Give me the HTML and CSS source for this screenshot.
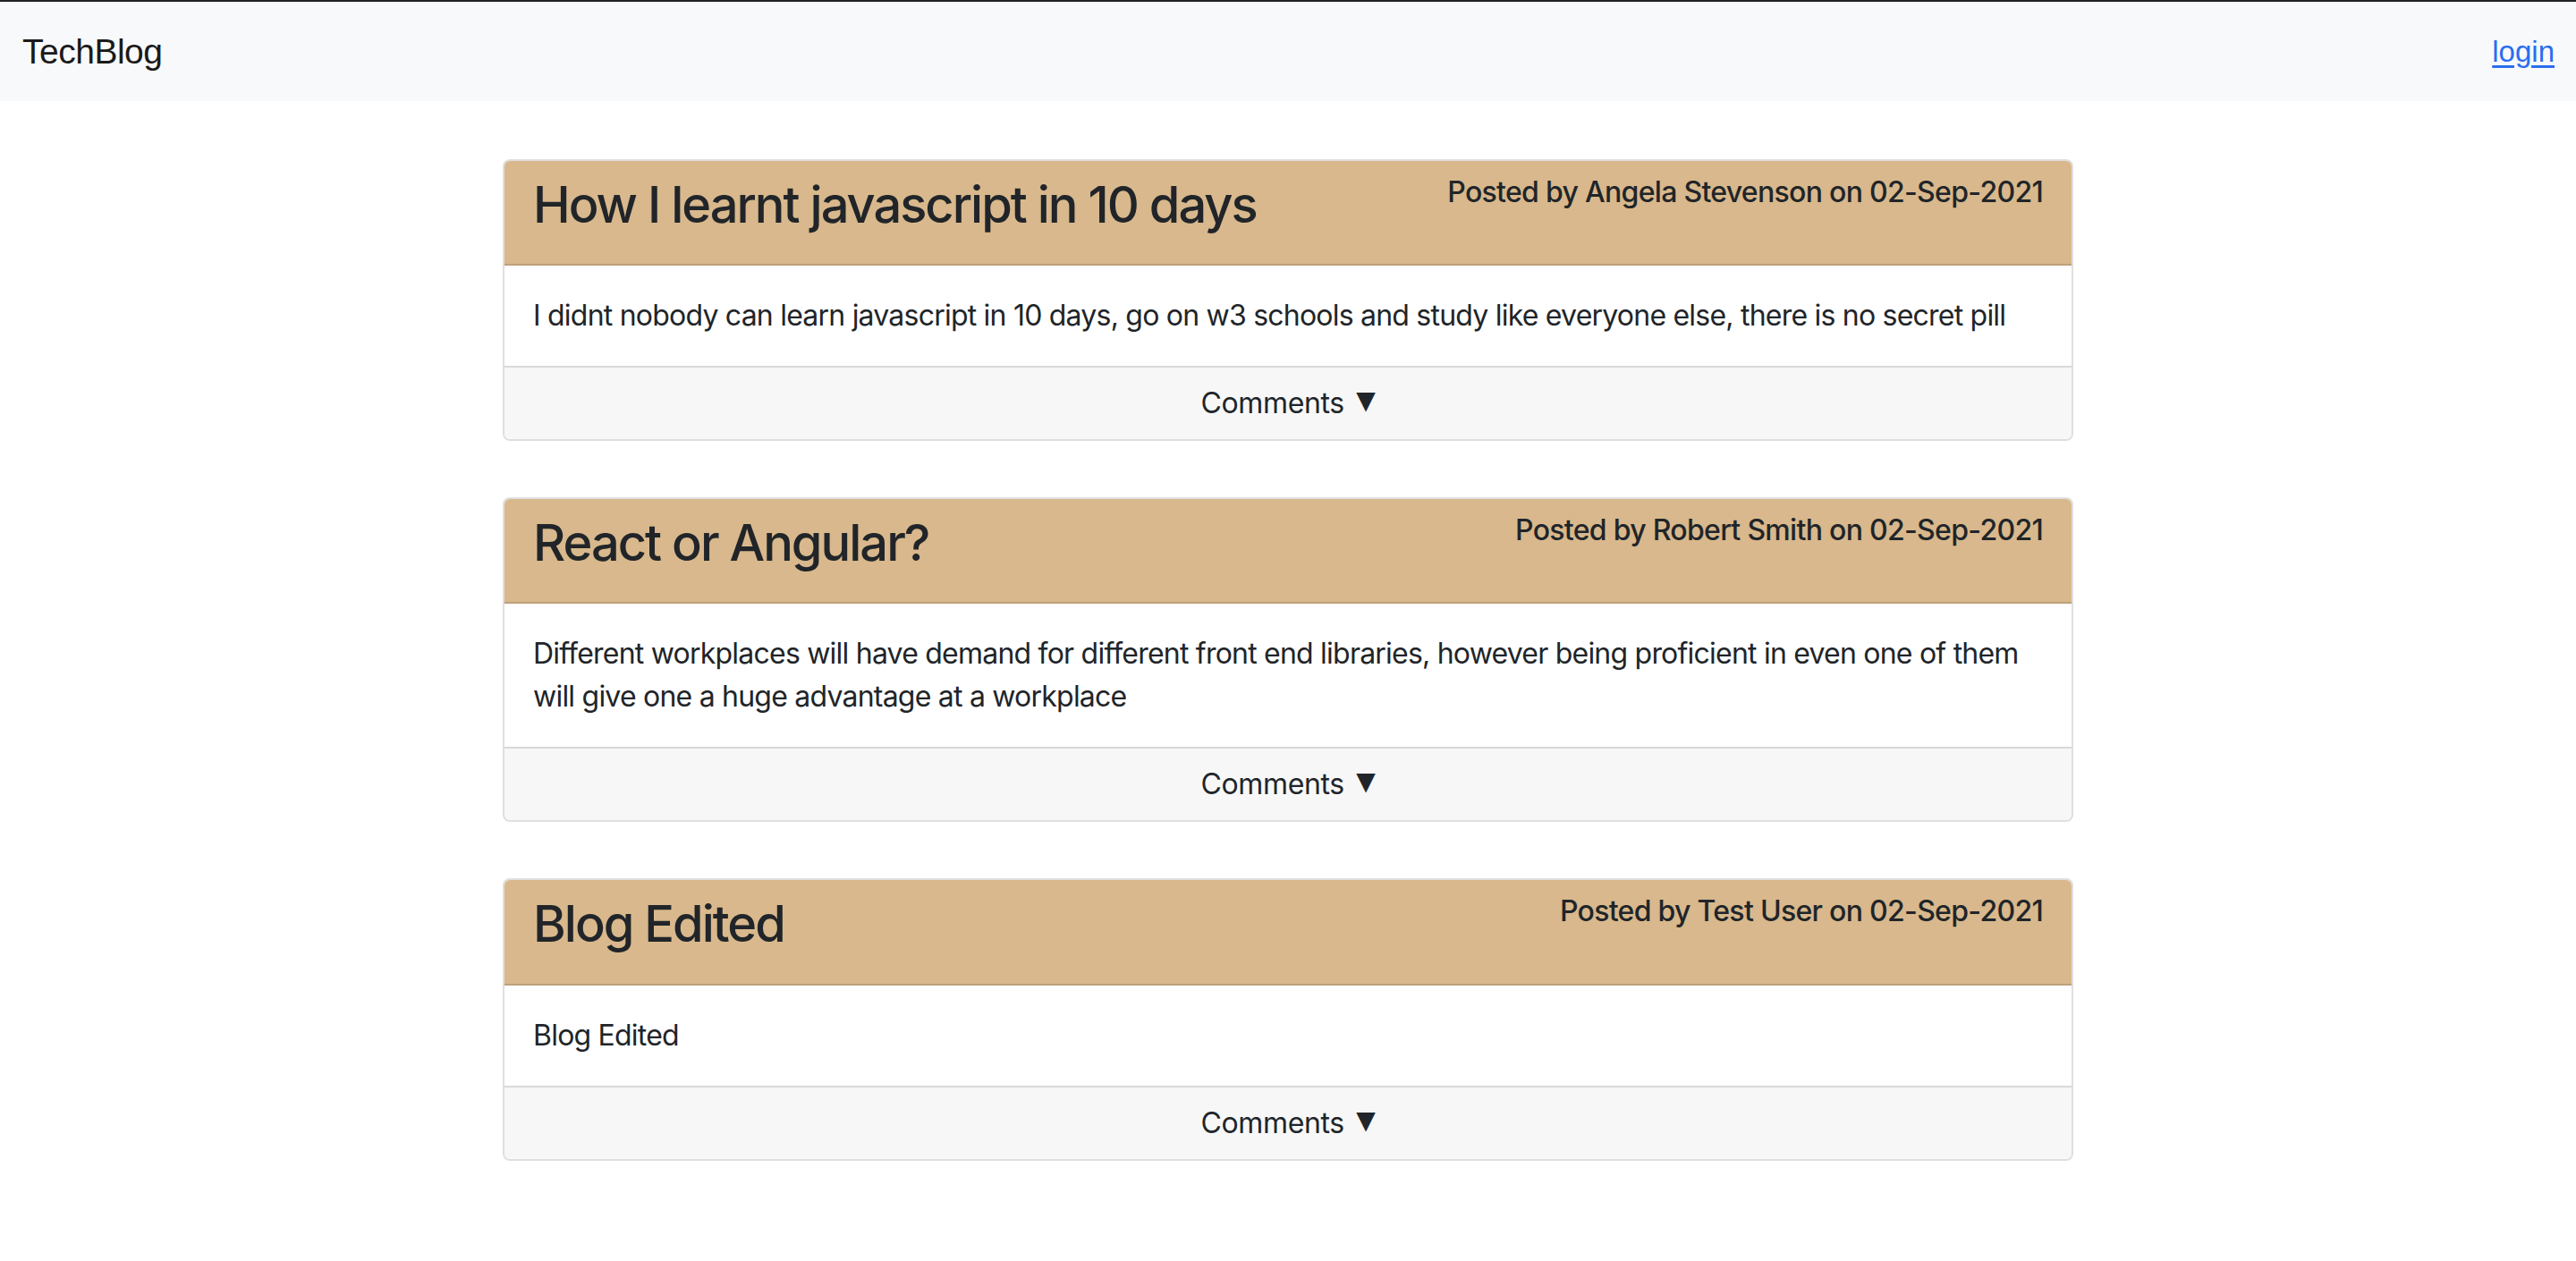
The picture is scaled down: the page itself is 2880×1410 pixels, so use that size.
FILE: index.html
```html
<!DOCTYPE html>
<html lang="en">
<head>
<meta charset="utf-8">
<title>TechBlog</title>
<link rel="stylesheet" href="styles.css">
</head>
<body>
<nav class="navbar">
  <a class="brand" href="#">TechBlog</a>
  <a class="nav-link" href="#">login</a>
</nav>
<main class="posts">
  <article class="card">
    <header class="card-header">
      <h3 class="post-title">How I learnt javascript in 10 days</h3>
      <h6 class="post-meta">Posted by Angela Stevenson on 02-Sep-2021</h6>
    </header>
    <div class="card-body">I didnt nobody can learn javascript in 10 days, go on w3 schools and study like everyone else, there is no secret pill</div>
    <div class="card-footer">Comments <span class="caret">▼</span></div>
  </article>
  <article class="card">
    <header class="card-header">
      <h3 class="post-title">React or Angular?</h3>
      <h6 class="post-meta">Posted by Robert Smith on 02-Sep-2021</h6>
    </header>
    <div class="card-body">Different workplaces will have demand for different front end libraries, however being proficient in even one of them will give one a huge advantage at a workplace</div>
    <div class="card-footer">Comments <span class="caret">▼</span></div>
  </article>
  <article class="card">
    <header class="card-header">
      <h3 class="post-title">Blog Edited</h3>
      <h6 class="post-meta">Posted by Test User on 02-Sep-2021</h6>
    </header>
    <div class="card-body">Blog Edited</div>
    <div class="card-footer">Comments <span class="caret">▼</span></div>
  </article>
</main>
</body>
</html>
```
FILE: styles.css
```css
* { box-sizing: border-box; }

html, body {
  margin: 0;
  padding: 0;
  background: #ffffff;
}

body {
  font-family: Inter, "Noto Sans", sans-serif;
  color: #212529;
}

.navbar {
  display: flex;
  align-items: center;
  justify-content: space-between;
  height: 113px;
  padding: 0 24px 0 25px;
  background: #f8f9fa;
  border-top: 2px solid #222222;
  font-family: "Liberation Sans", Arial, sans-serif;
}

.brand {
  font-size: 39px;
  letter-spacing: -0.5px;
  color: #1a1a1a;
  text-decoration: none;
}

.nav-link {
  font-size: 33px;
  color: #2a6ef0;
  text-decoration: underline;
  text-underline-offset: 4px;
}

.posts {
  display: flex;
  flex-direction: column;
  gap: 63px;
  padding-top: 65px;
  padding-bottom: 60px;
}

.card {
  width: 1756px;
  margin: 0 auto;
  border: 2px solid rgba(0, 0, 0, 0.125);
  border-radius: 8px;
  overflow: hidden;
  background: #ffffff;
}

.card-header {
  display: flex;
  justify-content: space-between;
  align-items: flex-start;
  padding: 16px 32px;
  background: #d8b88c;
  border-bottom: 2px solid rgba(0, 0, 0, 0.125);
}

.post-title {
  margin: 0 0 16px;
  font-size: 56px;
  font-weight: 500;
  line-height: 1.2;
  letter-spacing: -2px;
}

.post-meta {
  margin: 0 0 16px;
  font-size: 32px;
  font-weight: 500;
  line-height: 1.2;
  letter-spacing: -0.7px;
}

.card-body {
  padding: 32px;
  font-size: 32px;
  line-height: 1.5;
  letter-spacing: -0.78px;
}

.card-footer {
  padding: 16px 32px;
  background: #f7f7f7;
  border-top: 2px solid rgba(0, 0, 0, 0.125);
  text-align: center;
  font-size: 32px;
  line-height: 1.5;
  letter-spacing: -0.4px;
}

.caret {
  margin-left: 5px;
  font-family: "DejaVu Sans", sans-serif;
  font-size: 28px;
  vertical-align: 5px;
}
```
